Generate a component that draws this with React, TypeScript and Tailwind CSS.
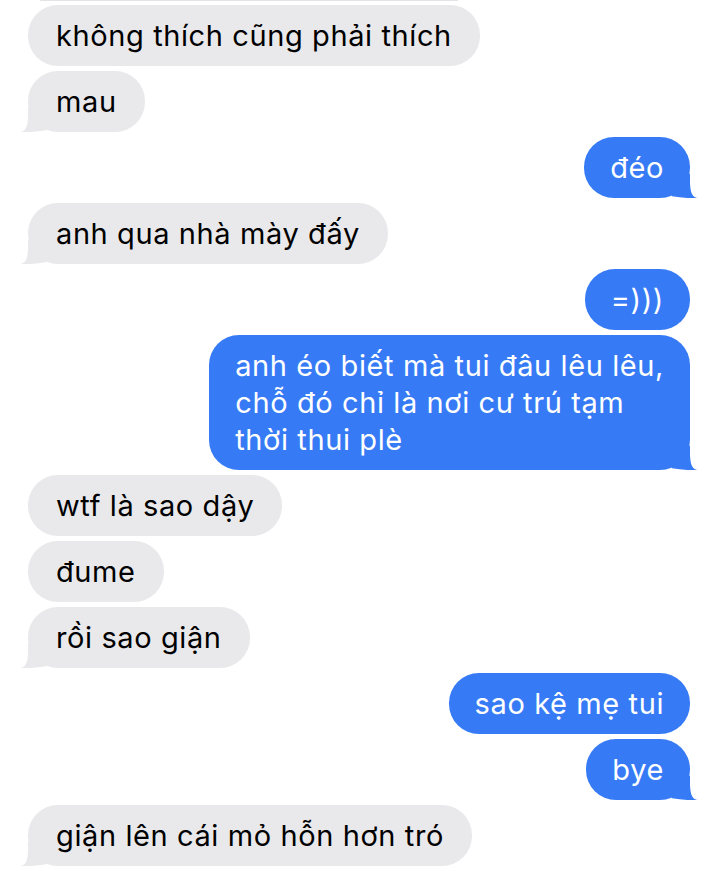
import React from "react";

type Msg = {
  from: "me" | "them";
  text: React.ReactNode;
  tail?: boolean;
};

const messages: Msg[] = [
  { from: "them", text: "không thích cũng phải thích" },
  { from: "them", text: "mau", tail: true },
  { from: "me", text: "đéo", tail: true },
  { from: "them", text: "anh qua nhà mày đấy", tail: true },
  { from: "me", text: "=)))" },
  {
    from: "me",
    text: (
      <>
        anh éo biết mà tui đâu lêu lêu,
        <br />
        chỗ đó chỉ là nơi cư trú tạm
        <br />
        thời thui plè
      </>
    ),
    tail: true,
  },
  { from: "them", text: "wtf là sao dậy" },
  { from: "them", text: "đume" },
  { from: "them", text: "rồi sao giận", tail: true },
  { from: "me", text: "sao kệ mẹ tui" },
  { from: "me", text: "bye", tail: true },
  { from: "them", text: "giận lên cái mỏ hỗn hơn tró", tail: true },
];

function Tail({ side, color }: { side: "left" | "right"; color: string }) {
  return (
    <svg
      width="30"
      height="24"
      viewBox="0 0 30 24"
      className={
        side === "left"
          ? "absolute -left-[8px] bottom-0"
          : "absolute -right-[8px] bottom-0 -scale-x-100"
      }
    >
      <path
        d="M0 24 C5 23.6 7.6 20 8 9 L8 0 L26 0 L26 22.3 Q13 24.6 0 24 Z"
        fill={color}
      />
    </svg>
  );
}

function Bubble({ msg }: { msg: Msg }) {
  const me = msg.from === "me";
  return (
    <div className={me ? "flex justify-end pr-[29px]" : "flex justify-start pl-[28px]"}>
      <div
        className={
          me
            ? "relative rounded-[30px] bg-[#367af6] px-[26px] py-[12px] text-white"
            : "relative rounded-[30px] bg-[#e9e9eb] px-[28px] py-[12px] text-black"
        }
      >
        {msg.tail && <Tail side={me ? "right" : "left"} color={me ? "#367af6" : "#e9e9eb"} />}
        <p className="relative whitespace-nowrap text-[29px] leading-[37px] tracking-[0.6px]">{msg.text}</p>
      </div>
    </div>
  );
}

export default function App() {
  return (
    <div
      className="h-[871px] w-[719px] overflow-hidden bg-white"
      style={{ fontFamily: 'Inter, "Liberation Sans", sans-serif' }}
    >
      <div className="ml-[40px] h-[1px] w-[418px] bg-[#e4e4e6]" />
      <div className="flex flex-col gap-[5px] pt-[4px]">
        {messages.map((m, i) => (
          <Bubble key={i} msg={m} />
        ))}
      </div>
    </div>
  );
}
